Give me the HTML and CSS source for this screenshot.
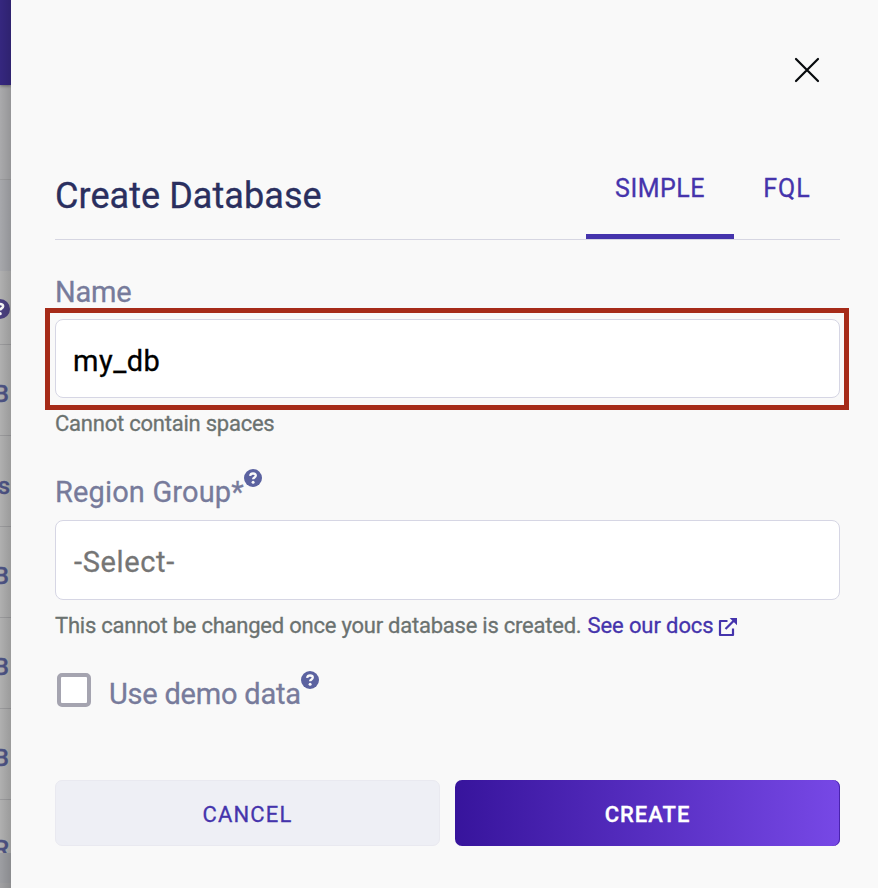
FILE: index.html
```html
<!DOCTYPE html>
<html lang="en">
<head>
<meta charset="utf-8">
<title>Create Database</title>
<link rel="stylesheet" href="styles.css">
</head>
<body>
<svg width="0" height="0" class="defs">
  <symbol id="help" viewBox="0 0 18 18">
    <circle cx="9" cy="9" r="9" fill="currentColor"/>
    <path class="mark" d="M6.1 6.9C6.4 5.2 7.5 4.5 9 4.5c1.6 0 2.8.8 2.8 2.1 0 1.9-2.7 1.8-2.7 3.7" fill="none" stroke-width="2.3"/>
    <circle class="dot" cx="9.1" cy="13.2" r="1.5"/>
  </symbol>
</svg>
<div class="app">
  <aside class="backdrop">
    <div class="topbar"></div>
    <div class="band"></div>
    <div class="band band-second"></div>
    <div class="row row-head"><svg class="help help-dim"><use href="#help"/></svg></div>
    <div class="row"><span>B</span></div>
    <div class="row row-s"><span>s</span></div>
    <div class="row"><span>B</span></div>
    <div class="row"><span>B</span></div>
    <div class="row"><span>B</span></div>
    <div class="row row-last"><span>R</span></div>
    <div class="footer"></div>
  </aside>
  <main class="panel">
    <div class="close-row">
      <svg class="close" viewBox="0 0 26 26"><path d="M2 2l22 22M24 2L2 24" fill="none" stroke="#06090c" stroke-width="2.2" stroke-linecap="round"/></svg>
    </div>
    <header class="head">
      <h1 class="title">Create Database</h1>
      <nav class="tabs">
        <a class="tab tab-active">SIMPLE</a>
        <a class="tab tab-fql">FQL</a>
      </nav>
    </header>
    <div class="label label-name">Name</div>
    <div class="field field-name"><span class="value">my_db</span><div class="highlight"></div></div>
    <div class="hint hint-name">Cannot contain spaces</div>
    <div class="label label-region"><span>Region Group*</span><svg class="help"><use href="#help"/></svg></div>
    <div class="field field-region"><span class="value placeholder">-Select-</span></div>
    <div class="hint hint-region"><span class="note">This cannot be changed once your database is created.</span><a class="docs">See our docs</a><svg class="external" viewBox="0 0 20 20"><path d="M9.5 4H2v14h13v-6.5M7.5 12L17 2.5" fill="none" stroke="currentColor" stroke-width="2.2" stroke-linejoin="round"/><path d="M11.7 1H19v7.3z" fill="currentColor"/></svg></div>
    <div class="check"><span class="box"></span><span class="label check-label">Use demo data</span><svg class="help"><use href="#help"/></svg></div>
    <div class="actions">
      <button class="btn btn-cancel">CANCEL</button>
      <button class="btn btn-create">CREATE</button>
    </div>
  </main>
</div>
</body>
</html>
```
FILE: styles.css
```css
* { box-sizing: border-box; }
body { margin: 0; font-family: Roboto, "Liberation Sans", sans-serif; background: #f9f9f9; -webkit-text-stroke: .3px currentColor; }
.defs { display: block; }
.app { display: flex; width: 878px; height: 888px; overflow: hidden; }

.backdrop { position: relative; width: 11px; height: 888px; flex: none; overflow: hidden; background: #b0b0b0; }
.backdrop::after { content: ""; position: absolute; inset: 0; background: linear-gradient(90deg, rgba(0,0,0,0), rgba(0,0,0,.12)); }
.topbar { height: 85px; background: #35277f; box-shadow: 0 1px 3px rgba(0,0,0,.4); position: relative; }
.band { height: 95px; background: #aaaaac; border-bottom: 1px solid #9c9c9e; }
.band-second { height: 91px; background: #a7a8ac; border: 0; }
.row { height: 91px; display: flex; justify-content: flex-end; padding: 34px 2px 0 0; border-bottom: 1px solid #9b9b9d; font-size: 24px; line-height: 30px; font-weight: 500; color: #4d5384; overflow: hidden; }
.row-head { height: 74px; padding: 28px 1px 0 0; }
.row-s { padding-top: 35px; padding-right: 1px; }
.row-last { height: 53px; border: 0; }
.footer { height: 35px; background: #9d9ea2; border-bottom: 5px solid #a1a1a3; }

.panel { flex: 1; padding: 0 38px 0 44px; background: #f9f9f9; }
.close-row { height: 167px; padding: 57px 20px 0 0; display: flex; justify-content: flex-end; }
.close { width: 26px; height: 26px; }
.head { height: 73px; display: flex; justify-content: space-between; border-bottom: 1px solid #d6d6e2; }
.title { margin: 9px 0 0; font-size: 36px; line-height: 40px; font-weight: 400; color: #2a2f5f; letter-spacing: .06px; white-space: nowrap; }
.tabs { display: flex; }
.tab { width: 148px; height: 72px; padding-top: 6px; text-align: center; font-size: 25px; line-height: 31px; letter-spacing: .5px; color: #4534ac; }
.tab-active { border-bottom: 5px solid #4534ac; }
.tab-fql { width: 106px; letter-spacing: 1px; }

.label { font-size: 29px; line-height: 40px; height: 40px; color: #777b9b; white-space: nowrap; }
.label-name { margin-top: 32px; letter-spacing: -.2px; }
.label-region { display: flex; margin-top: 33px; letter-spacing: .15px; }
.check-label { letter-spacing: -.22px; }
.field { position: relative; height: 79px; margin-top: 7px; padding: 22px 0 0 17px; border: 1px solid #d6d6e4; border-radius: 8px; background: #fff; }
.field-region { height: 80px; margin-top: 8px; padding-left: 18px; }
.value { display: block; font-size: 29px; line-height: 38px; letter-spacing: .5px; color: #000; }
.placeholder { color: #757575; letter-spacing: .65px; }
.highlight { position: absolute; inset: -12px -10px -13px -11px; border: 5px solid #a62b19; }
.hint { display: flex; height: 31px; font-size: 22px; line-height: 31px; letter-spacing: -.23px; color: #6b7270; white-space: nowrap; }
.hint-name { margin-top: 10px; }
.hint-region { margin-top: 10px; }
.docs { color: #4534ac; margin-left: 6px; letter-spacing: -.1px; }
.external { width: 20px; height: 20px; margin: 7px 0 0 4px; color: #4534ac; }
.help { width: 18px; height: 18px; color: #5b62a0; flex: none; margin-top: -3px; }
.mark { stroke: #f9f9f9; }
.dot { fill: #f9f9f9; }
.help-dim { width: 20px; height: 20px; margin: 0; color: #4b4180; }
.check { display: flex; height: 40px; margin-top: 33px; }
.box { width: 34px; height: 34px; margin: -1px 18px 0 2px; border: 4px solid #a5a4b0; border-radius: 5px; background: #fff; }
.actions { display: flex; gap: 15px; margin-top: 66px; }
.btn { width: 385px; height: 66px; padding: 3px 0 0; border-radius: 7px; font: 400 22px/30px Roboto, "Liberation Sans", sans-serif; letter-spacing: 1.2px; }
.btn-cancel { border: 1px solid #e9e9f0; background: #eeeff5; color: #4534ac; }
.btn-create { border: 0; background: linear-gradient(90deg, #37149c, #7748e6); box-shadow: inset -1px 0 #4a23ae; color: #fff; letter-spacing: 1px; font-weight: 500; }
```
